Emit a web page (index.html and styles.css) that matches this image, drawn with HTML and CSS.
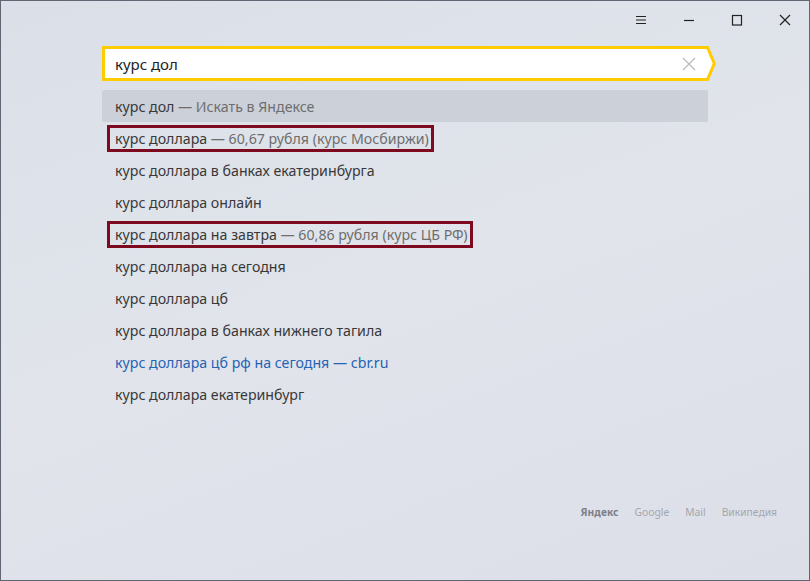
FILE: index.html
```html
<!DOCTYPE html>
<html lang="ru">
<head>
    <meta charset="UTF-8">
    <title>Яндекс — поиск</title>
    <link rel="stylesheet" href="styles.css">
</head>
<body>
    <div class="window">
        <div class="titlebar">
            <button class="win-btn" title="Меню">
                <svg width="12" height="10" viewBox="0 0 12 10"><path d="M1 1.5h10M1 5h10M1 8.5h10" stroke="#222" stroke-width="1.2"/></svg>
            </button>
            <button class="win-btn" title="Свернуть">
                <svg width="12" height="10" viewBox="0 0 12 10"><path d="M1 5.5h10" stroke="#222" stroke-width="1.2"/></svg>
            </button>
            <button class="win-btn" title="Развернуть">
                <svg width="12" height="12" viewBox="0 0 12 12"><rect x="1.5" y="1.5" width="9" height="9.5" fill="none" stroke="#222" stroke-width="1.2"/></svg>
            </button>
            <button class="win-btn" title="Закрыть">
                <svg width="12" height="12" viewBox="0 0 12 12"><path d="M1 1l10 10M11 1L1 11" stroke="#222" stroke-width="1.2"/></svg>
            </button>
        </div>

        <main class="content">
            <form class="search">
                <div class="search-field">
                    <input type="text" value="курс дол">
                    <svg class="clear" width="14" height="14" viewBox="0 0 14 14"><path d="M1 1l12 12M13 1L1 13" stroke="#b8b8b8" stroke-width="1.1"/></svg>
                </div>
                <svg class="search-tip" width="12" height="35" viewBox="0 0 12 35">
                    <path d="M0 1.5H3.5L10.3 17.5L3.5 33.5H0Z" fill="#fff"/>
                    <path d="M0 1.5H3.5L10.3 17.5L3.5 33.5H0" fill="none" stroke="#ffcc00" stroke-width="3"/>
                </svg>
            </form>

            <ul class="suggest">
                <li class="active">курс дол <span class="hint">— Искать в Яндексе</span></li>
                <li><span class="marked">курс доллара <span class="hint">— 60,67 рубля (курс Мосбиржи)</span></span></li>
                <li>курс доллара в банках екатеринбурга</li>
                <li>курс доллара онлайн</li>
                <li><span class="marked">курс доллара на завтра <span class="hint">— 60,86 рубля (курс ЦБ РФ)</span></span></li>
                <li>курс доллара на сегодня</li>
                <li>курс доллара цб</li>
                <li>курс доллара в банках нижнего тагила</li>
                <li class="site">курс доллара цб рф на сегодня — cbr.ru</li>
                <li>курс доллара екатеринбург</li>
            </ul>
        </main>

        <footer class="engines">
            <span class="engine current">Яндекс</span>
            <span class="engine">Google</span>
            <span class="engine">Mail</span>
            <span class="engine">Википедия</span>
        </footer>
    </div>
</body>
</html>
```

FILE: styles.css
```css
* {
    margin: 0;
    padding: 0;
    box-sizing: border-box;
}

html, body {
    height: 100%;
}

body {
    font-family: 'Noto Sans', 'Open Sans', sans-serif;
    color: #333;
}

.window {
    height: 100%;
    border: 1px solid #5e6773;
    background: linear-gradient(160deg, #dbe0e8 0%, #e1e4eb 50%, #dcdfe8 100%);
    display: flex;
    flex-direction: column;
}

.titlebar {
    height: 38px;
    display: flex;
    justify-content: flex-end;
}

.win-btn {
    width: 48px;
    height: 38px;
    border: none;
    background: none;
    display: flex;
    align-items: center;
    justify-content: center;
}

.content {
    padding: 7px 0 0 101px;
}

.search {
    display: flex;
    height: 35px;
    width: 614px;
}

.search-field {
    flex: 1;
    display: flex;
    align-items: center;
    background: white;
    border: 3px solid #ffcc00;
    border-right: none;
    padding: 0 10px 0 10px;
}

.search-field input {
    flex: 1;
    border: none;
    outline: none;
    font-family: inherit;
    font-size: 15px;
    color: #222;
    background: none;
}

.clear {
    margin-right: -2px;
}

.suggest {
    list-style: none;
    margin-top: 9px;
    width: 606px;
}

.suggest li {
    height: 32px;
    display: flex;
    align-items: center;
    padding-left: 13px;
    font-size: 14.2px;
    color: #383838;
    white-space: nowrap;
}

.suggest li.active {
    background: #cbd0d9;
    border-radius: 2px;
}

.suggest .hint {
    color: #6e6e6e;
    margin-left: 0.25em;
}

.suggest li.site {
    color: #2563b3;
}

.marked {
    display: inline-flex;
    align-items: center;
    height: 27px;
    margin-left: -8px;
    margin-top: 1px;
    padding: 0 2px 0 5px;
    border: 3px solid #7e0a1f;
}

.engines {
    margin-top: auto;
    padding: 0 32px 61px 0;
    display: flex;
    justify-content: flex-end;
    gap: 16px;
    font-size: 10.3px;
}

.engine {
    color: #a3a7ae;
}

.engine.current {
    color: #7d8087;
    font-weight: bold;
}
```
